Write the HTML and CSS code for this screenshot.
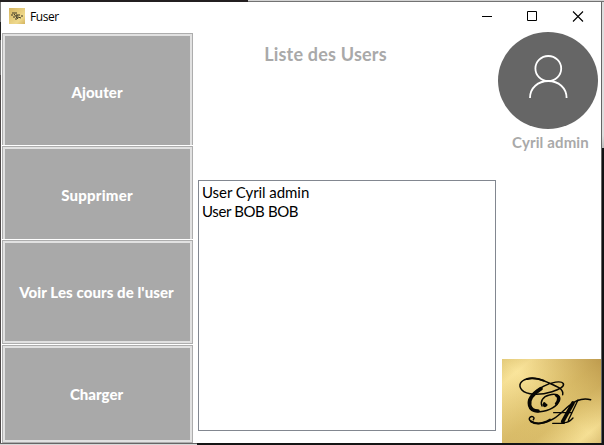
FILE: index.html
```html
<!DOCTYPE html>
<html lang="fr">
<head>
<meta charset="utf-8">
<title>Fuser</title>
<link rel="stylesheet" href="styles.css">
</head>
<body>
<div class="desktop">
<main class="window">
  <header class="titlebar">
    <svg class="app-icon" viewBox="0 0 16 16"><path d="M3 5h3M3 6v2M5 8v2M7 4v2M8 7v3M6 11h2M10 6v2M9 9l3 1M12 8h2M5 6l4 5M7 7h2" fill="none" stroke="#28251c" stroke-width=".9"/></svg>
    <span class="caption">Fuser</span>
    <svg class="controls" viewBox="0 0 138 29" fill="none" stroke="#000"><path d="M19 14.500h10M64.500 9.500h9v9h-9z"/><path stroke-width="1.100" d="M110 9.500l10 10M120 9.500l-10 10"/></svg>
  </header>
  <div class="content">
    <nav class="actions">
      <button class="action open"><span class="t-add">Ajouter</span></button>
      <button class="action open"><span class="t-del">Supprimer</span></button>
      <button class="action"><span class="t-view">Voir Les cours de l'user</span></button>
      <button class="action"><span class="t-load">Charger</span></button>
    </nav>
    <section class="center">
      <h1><span>Liste des Users</span></h1>
      <ul class="users"><li class="u1">User Cyril admin</li><li class="u2">User BOB BOB</li></ul>
    </section>
    <aside class="side">
      <svg class="avatar" viewBox="0 0 100 97"><ellipse cx="50" cy="48.500" rx="50" ry="48.500" fill="#666"/><g fill="none" stroke="#fff" stroke-width="1.800"><ellipse cx="50.300" cy="36.500" rx="12.900" ry="12.500"/><path d="M32 66c0-10 8-17 18.300-17s18.300 7 18.300 17"/></g></svg>
      <p class="name"><span>Cyril admin</span></p>
      <svg class="brand" viewBox="36 42 297 252" preserveAspectRatio="none">
        <defs><linearGradient id="gold" x1="0" y1="0" x2="1" y2="1"><stop offset="0" stop-color="#e3ca79"/><stop offset=".15" stop-color="#fae59c"/><stop offset=".5" stop-color="#dfc36f"/><stop offset=".65" stop-color="#dcc06d"/><stop offset=".88" stop-color="#f6e095"/><stop offset="1" stop-color="#dcc074"/></linearGradient>
        <linearGradient id="shade" x1="0" y1="1" x2="1" y2="0"><stop offset="0" stop-color="#c9a85a" stop-opacity=".35"/><stop offset=".5" stop-color="#d0ae58" stop-opacity="0"/><stop offset="1" stop-color="#b08a40" stop-opacity=".7"/></linearGradient></defs>
        <path d="M36 42h297v252H36z" fill="url(#gold)"/><path d="M36 42h297v252H36z" fill="url(#shade)"/>
        <g transform="translate(75 75)" fill="none" stroke="#080704" stroke-linecap="round">
          <path stroke-width="4.500" d="M143 74C147 58 128 50 100 38C78 28 58 22 38 26C16 31 9 46 20 59C35 76 75 76 111 65C133 58 149 50 145 41C139 31 109 36 85 49C61 62 43 79 42 99C42 118 55 127 75 125C103 124 128 108 134 89C137 74 120 70 103 75C83 80 75 94 81 108"/>
          <path stroke-width="5.500" d="M36 27C50 23 69 25 86 32"/>
          <path stroke-width="11" d="M78 56C54 71 40 90 44 106C47 118 56 123 69 123"/>
          <path stroke-width="9" d="M124 76C133 79 132 92 124 101"/>
          <path stroke-width="9" d="M88 101c-3 4 1 8 5 4"/>
          <path stroke-width="4.500" d="M227 89C205 83 181 91 161 108C134 132 113 157 77 160C52 162 37 150 45 142C52 136 61 143 55 149"/>
          <path stroke-width="6" d="M48 154C64 165 87 160 105 149"/>
          <path stroke-width="11" d="M174 99L143 155"/>
          <path stroke-width="4" d="M189 90L160 151M116 128H171M113 160H148M145 158C158 159 166 153 174 144"/>
        </g>
      </svg>
    </aside>
  </div>
</main>
<div class="right-edge"></div>
</div>
</body>
</html>
```
FILE: styles.css
```css
* { box-sizing: border-box; }
body { margin: 0; width: 604px; height: 445px; overflow: hidden; font-family: Lato, "Open Sans", sans-serif; }
.desktop { width: 604px; height: 445px; padding: 2px 0 2px 1px; display: flex;
  background:
    linear-gradient(#231f20, #231f20) 0 0 / 248px 2px no-repeat,
    linear-gradient(#d4d4d4 50%, #737373 50%) 248px 0 / 356px 2px no-repeat,
    linear-gradient(#666 50%, #d8d8d8 50%) 0 443px / 197px 2px no-repeat,
    linear-gradient(#151515, #151515) 197px 443px / 407px 2px no-repeat,
    linear-gradient(#777 0 22px, #222 22px 40px, #777 40px 75px, #4d4848 75px) 0 0 / 1px 445px no-repeat; }
.window { width: 600px; height: 441px; background: #fff; flex: none; }
.right-edge { width: 3px; height: 441px; background: linear-gradient(90deg, #666 1px, transparent 1px), linear-gradient(#dedede 0 133px, #bcbcbc 146px, #111214 146px); }
.titlebar { height: 31px; padding-left: 8px; display: flex; align-items: flex-start; }
.app-icon { width: 16px; height: 16px; margin-top: 6px; background: linear-gradient(135deg, #d5b560, #efd98d 70%, #d3b35e); }
.caption { font: 12px/16px "Open Sans"; letter-spacing: -.45px; margin: 7px 0 0 5px; color: #000; }
.controls { width: 138px; height: 29px; margin-left: auto; }
.content { height: 410px; display: grid; grid-template-columns: 192px 305px 103px; }
.actions { padding-left: 1px; display: grid; grid-template-rows: 112px 93px 104px 98px; gap: 1px; }
.action { width: 191px; margin: 0; padding: 0; border: 1px solid #adadad; box-shadow: inset 0 0 0 2px #e1e1e1; background: #a9a9a9; color: #fff; font: 900 15px/18px Lato; display: flex; align-items: center; justify-content: center; }
.open { border-bottom: 0; box-shadow: inset 2px 2px #e1e1e1, inset -2px 0 #e1e1e1; }
.action span { white-space: nowrap; transform: translate(-.5px, 2px); }
.action .t-view, .action .t-load { transform: translate(-1px, 0); }
.t-add { letter-spacing: .05px; }
.t-del { letter-spacing: .2px; }
.t-view { letter-spacing: .08px; }
.center { padding-left: 5px; }
h1 { margin: 0; height: 147px; padding-top: 9px; text-align: center; color: #a9a9a9; font: 700 18px/24px Lato; padding-right: 45px; letter-spacing: .2px; }
.users { width: 298px; height: 251px; border: 1px solid #828790; margin: 0; padding: 2px 3px; list-style: none; font: 15px/19px Lato; color: #000; }
.u1 { letter-spacing: -.06px; }
.u2 { letter-spacing: -.38px; }
.side { display: flex; flex-direction: column; align-items: center; }
.avatar { width: 100px; height: 97px; margin: -1px 0 0 -3px; flex: none; }
.name { margin: 3px 0 0 2px; height: 20px; font: 700 15px/20px Lato; letter-spacing: .14px; color: #a9a9a9; white-space: nowrap; }
.brand { width: 99px; height: 84px; margin-top: auto; align-self: flex-end; }
```
